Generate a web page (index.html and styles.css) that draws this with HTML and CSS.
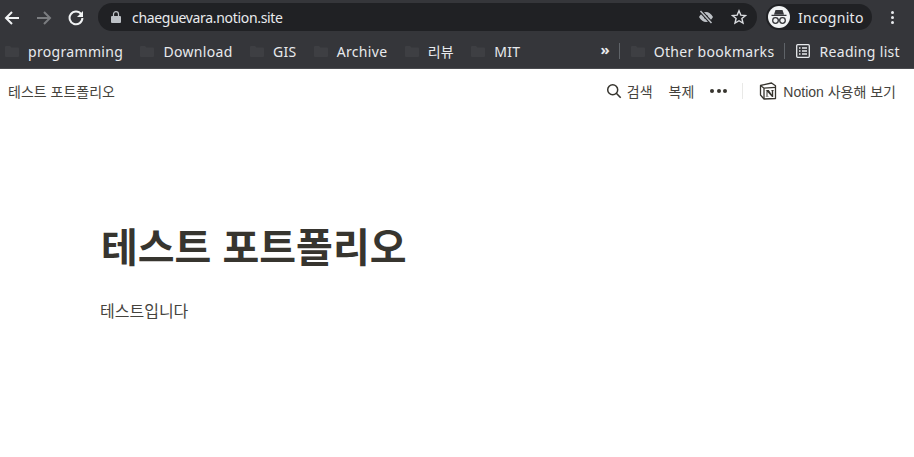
FILE: index.html
```html
<!DOCTYPE html>
<html lang="ko">
<head>
<meta charset="utf-8">
<title>테스트 포트폴리오</title>
<link rel="stylesheet" href="styles.css">
</head>
<body>
<div class="toolbar">
  <svg class="nav-ico first" width="16" height="16" viewBox="0 0 16 16"><path d="M15 8H2.5M8 2L2 8l6 6" fill="none" stroke="#f1f3f4" stroke-width="2"/></svg>
  <svg class="nav-ico" width="16" height="16" viewBox="0 0 16 16"><path d="M1 8h12.5M8 2l6 6-6 6" fill="none" stroke="#7b7d80" stroke-width="2"/></svg>
  <svg class="nav-ico" width="16" height="16" viewBox="0 0 16 16"><path d="M13.2 4.2A6.4 6.4 0 1 0 14.4 8" fill="none" stroke="#f1f3f4" stroke-width="2"/><path d="M15 1v6H9z" fill="#f1f3f4"/></svg>
  <div class="omnibox">
    <svg width="10" height="12" viewBox="0 0 10 12"><path d="M1 5h8a1 1 0 0 1 1 1v5a1 1 0 0 1-1 1H1a1 1 0 0 1-1-1V6a1 1 0 0 1 1-1z" fill="#bdc1c6"/><path d="M2.5 5V3.2a2.5 2.5 0 0 1 5 0V5" fill="none" stroke="#bdc1c6" stroke-width="1.2"/></svg>
    <span class="url">chaeguevara.notion.site</span>
    <svg class="eye" width="16" height="14" viewBox="0 0 16 14"><path d="M1 7c2-3.6 4.400-5 7-5s5 1.400 7 5c-2 3.600-4.400 5-7 5S3 10.600 1 7z" fill="#bdc1c6"/><circle cx="8" cy="7" r="2" fill="#202124"/><path d="M2.500 1l11 12" stroke="#202124" stroke-width="3.600"/><path d="M2.500 1l11 12" stroke="#bdc1c6" stroke-width="1.500"/></svg>
    <svg class="star" width="16" height="16" viewBox="0 0 16 16"><path d="M8 1.800l1.800 4.300 4.700.4-3.600 3 1.100 4.600L8 11.700l-4 2.400 1.100-4.600-3.600-3 4.700-.4z" fill="none" stroke="#dadce0" stroke-width="1.400"/></svg>
  </div>
  <div class="profile">
    <span class="avatar">
      <svg width="18" height="16" viewBox="0 0 18 16"><path d="M5.500 1h7l1.500 4.500H4zM1.500 5.800h15v1.200h-15z" fill="#35363a"/><circle cx="5.500" cy="11.500" r="2.800" fill="none" stroke="#35363a" stroke-width="1.300"/><circle cx="12.500" cy="11.500" r="2.800" fill="none" stroke="#35363a" stroke-width="1.300"/><path d="M8 11h2" stroke="#35363a" stroke-width="1.200"/></svg>
    </span>
    <span class="profile-name">Incognito</span>
  </div>
  <span class="kebab"><i></i><i></i><i></i></span>
</div>
<div class="bookmarks">
  <a class="bm"><svg class="folder" viewBox="0 0 14 11"><path d="M1 0h4l1.500 1.500H13a1 1 0 0 1 1 1V10a1 1 0 0 1-1 1H1a1 1 0 0 1-1-1V1a1 1 0 0 1 1-1z"/></svg>programming</a>
  <a class="bm"><svg class="folder" viewBox="0 0 14 11"><path d="M1 0h4l1.500 1.500H13a1 1 0 0 1 1 1V10a1 1 0 0 1-1 1H1a1 1 0 0 1-1-1V1a1 1 0 0 1 1-1z"/></svg>Download</a>
  <a class="bm"><svg class="folder" viewBox="0 0 14 11"><path d="M1 0h4l1.500 1.500H13a1 1 0 0 1 1 1V10a1 1 0 0 1-1 1H1a1 1 0 0 1-1-1V1a1 1 0 0 1 1-1z"/></svg>GIS</a>
  <a class="bm"><svg class="folder" viewBox="0 0 14 11"><path d="M1 0h4l1.500 1.500H13a1 1 0 0 1 1 1V10a1 1 0 0 1-1 1H1a1 1 0 0 1-1-1V1a1 1 0 0 1 1-1z"/></svg>Archive</a>
  <a class="bm"><svg class="folder" viewBox="0 0 14 11"><path d="M1 0h4l1.500 1.500H13a1 1 0 0 1 1 1V10a1 1 0 0 1-1 1H1a1 1 0 0 1-1-1V1a1 1 0 0 1 1-1z"/></svg>리뷰</a>
  <a class="bm"><svg class="folder" viewBox="0 0 14 11"><path d="M1 0h4l1.500 1.500H13a1 1 0 0 1 1 1V10a1 1 0 0 1-1 1H1a1 1 0 0 1-1-1V1a1 1 0 0 1 1-1z"/></svg>MIT</a>
  <span class="chev">»</span>
  <span class="sep"></span>
  <a class="bm other"><svg class="folder" viewBox="0 0 14 11"><path d="M1 0h4l1.500 1.500H13a1 1 0 0 1 1 1V10a1 1 0 0 1-1 1H1a1 1 0 0 1-1-1V1a1 1 0 0 1 1-1z"/></svg>Other bookmarks</a>
  <span class="sep second"></span>
  <a class="bm reading"><svg class="list" width="14" height="14" viewBox="0 0 14 14"><rect x=".7" y=".7" width="12.600" height="12.600" rx="1" fill="none" stroke="#e8eaed" stroke-width="1.300"/><path d="M3 4h1.500M3 7h1.500M3 10h1.500M6 4h5M6 7h5M6 10h5" stroke="#e8eaed" stroke-width="1.300"/></svg>Reading list</a>
</div>
<header class="topbar">
  <div class="crumb">테스트 포트폴리오</div>
  <nav class="actions">
    <span class="action search"><svg width="16" height="16" viewBox="0 0 16 16"><circle cx="6.700" cy="6.700" r="5" fill="none" stroke="#37352f" stroke-width="1.500"/><path d="M10.300 10.300l4.400 4.400" stroke="#37352f" stroke-width="1.600"/></svg>검색</span>
    <span class="action dup">복제</span>
    <span class="dots"><i></i><i></i><i></i></span>
    <span class="divider"></span>
    <span class="action try">
      <svg width="18" height="18" viewBox="0 0 18 18"><path d="M1.500 3.500L12.500 1 16.500 3.800V16.500L5 17 1.500 13z" fill="#fff" stroke="#37352f" stroke-width="1.300" stroke-linejoin="round"/><path d="M1.500 3.500L5 6.200l11.500-.8M5 6.200V17" fill="none" stroke="#37352f" stroke-width="1.300"/><path d="M6.800 8h3l3 4.500V8.600h-.8V8h3v.6h-.8V15h-1.200L8.500 10v4h1v.6H6.800V14h.7V8.600h-.7z" fill="#37352f"/></svg>
      Notion 사용해 보기
    </span>
  </nav>
</header>
<main class="page">
  <h1 class="title">테스트 포트폴리오</h1>
  <p class="text">테스트입니다</p>
</main>
</body>
</html>
```
FILE: styles.css
```css
* { box-sizing: border-box; }
html, body { margin: 0; height: 100%; overflow: hidden; background: #fff; }
body { font-family: "Noto Sans", "Noto Sans CJK KR", sans-serif; }

.toolbar {
  height: 34px;
  background: #35363a;
  display: flex;
  align-items: center;
  padding-top: 1px;
}
.nav-ico { margin-right: 16px; flex: none; }
.nav-ico.first { margin-left: 4px; }
.omnibox {
  margin-left: -2px;
  width: 659px;
  height: 28px;
  background: #202124;
  border-radius: 14px;
  display: flex;
  align-items: center;
  padding-left: 13px;
  padding-right: 10px;
  margin-top: -1px;
}
.url {
  color: #e8eaed;
  font-size: 14px;
  margin-left: 11px;
  letter-spacing: -0.32px;
  flex: 1;
}
.star { margin-left: 17px; }
.profile {
  margin-left: 9px;
  width: 106px;
  height: 26px;
  border-radius: 13px;
  background: #202124;
  display: flex;
  align-items: center;
  padding-left: 2px;
  margin-top: -1px;
}
.avatar {
  width: 22px;
  height: 22px;
  border-radius: 50%;
  background: #f1f3f4;
  display: flex;
  align-items: center;
  justify-content: center;
}
.profile-name { color: #e8eaed; font-size: 14px; margin-left: 8px; letter-spacing: .3px; }
.kebab { display: flex; flex-direction: column; gap: 2px; margin-left: 19px; margin-top: -1px; }
.kebab i { width: 3px; height: 3px; border-radius: 50%; background: #e8eaed; display: block; }

.bookmarks {
  height: 35px;
  background: #35363a;
  border-bottom: 1px solid #4a4b4f;
  display: flex;
  align-items: center;
  padding: 0 14px 0 5px;
  color: #e8eaed;
  font-size: 14px;
}
.bm { display: flex; align-items: center; margin-right: 17.2px; white-space: nowrap; letter-spacing: .33px; }
.folder { width: 14px; height: 11px; fill: #3e3f43; margin-right: 9px; flex: none; }
.chev { margin-left: auto; font-weight: 700; font-size: 15px; line-height: 1; margin-top: -3px; }
.sep { width: 1px; height: 16px; background: #5f6368; margin-left: 9px; }
.bm.other { margin-left: 11px; margin-right: 10px; }
.sep.second { margin-left: 0; }
.bm.reading { margin-left: 11px; margin-right: 0; }
.list { margin-right: 9px; }

.topbar {
  height: 45px;
  display: flex;
  align-items: center;
  justify-content: space-between;
  padding: 0 18px 2px 8px;
  color: #45433d;
  font-family: "Liberation Sans", "Noto Sans CJK KR", sans-serif;
  font-size: 14px;
}
.actions { display: flex; align-items: center; }
.action { display: flex; align-items: center; white-space: nowrap; }
.search svg { margin-right: 5px; }
.dup { margin-left: 16px; }
.dots { display: flex; gap: 2.500px; margin-left: 16px; }
.dots i { width: 4px; height: 4px; border-radius: 50%; background: #37352f; display: block; }
.divider { width: 1px; height: 16px; background: #e9e9e7; margin: 0 16px 0 15px; }
.try svg { margin-right: 6px; }

.page {
  padding: 110px 0 0 101px;
  color: #37352f;
  font-family: "Liberation Sans", "Noto Sans CJK KR", sans-serif;
}
.title { margin: 0; font-size: 40px; line-height: 48px; font-weight: 700; }
.text { margin: 28px 0 0 -1px; font-size: 16px; line-height: 24px; color: #45433d; }
```
